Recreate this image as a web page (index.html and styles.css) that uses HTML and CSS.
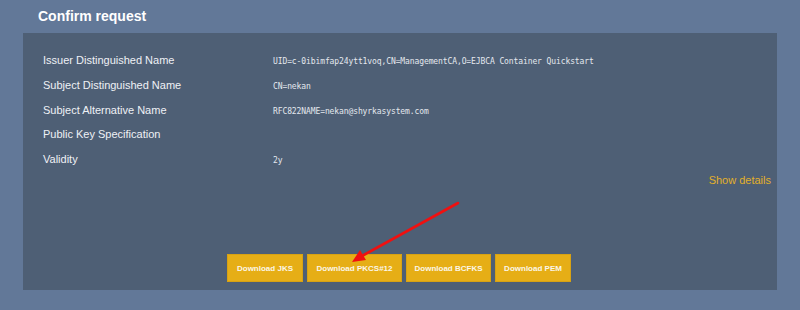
FILE: index.html
```html
<!DOCTYPE html>
<html>
<head>
<meta charset="utf-8">
<link rel="stylesheet" href="styles.css">
</head>
<body>
<div class="page">
  <h1 class="title">Confirm request</h1>
  <div class="panel">
    <div class="rows">
      <div class="row"><div class="label">Issuer Distinguished Name</div><div class="value">UID=c-0ibimfap24ytt1voq,CN=ManagementCA,O=EJBCA Container Quickstart</div></div>
      <div class="row"><div class="label">Subject Distinguished Name</div><div class="value">CN=nekan</div></div>
      <div class="row"><div class="label">Subject Alternative Name</div><div class="value">RFC822NAME=nekan@shyrkasystem.com</div></div>
      <div class="row"><div class="label">Public Key Specification</div><div class="value"></div></div>
      <div class="row"><div class="label">Validity</div><div class="value">2y</div></div>
    </div>
    <div class="details"><a class="details-link">Show details</a></div>
    <div class="buttons">
      <button class="btn btn-jks">Download JKS</button>
      <button class="btn btn-p12">Download PKCS#12</button>
      <button class="btn btn-bcfks">Download BCFKS</button>
      <button class="btn btn-pem">Download PEM</button>
    </div>
  </div>
</div>
<svg class="arrow" width="800" height="310" viewBox="0 0 800 310">
  <line x1="458" y1="203" x2="362" y2="256" stroke="#f01010" stroke-width="2.6" stroke-linecap="round"/>
  <polygon points="352,262 360,250 366,260" fill="#f01010"/>
</svg>
</body>
</html>
```
FILE: styles.css
```css
html, body {
  margin: 0;
  padding: 0;
  background: #627898;
  width: 800px;
  height: 310px;
  overflow: hidden;
  font-family: "Liberation Sans", Arial, sans-serif;
}
.page {
  padding: 0 23px 0 23px;
}
.title {
  margin: 0;
  height: 33px;
  line-height: 33px;
  padding-left: 15px;
  font-size: 14px;
  font-weight: bold;
  color: #ffffff;
}
.panel {
  background: #4e5f75;
  padding: 15px 5px 8px 20px;
  height: 257px;
  box-sizing: border-box;
  display: flex;
  flex-direction: column;
}
.row {
  display: flex;
  align-items: baseline;
  height: 24.75px;
  line-height: 24.75px;
}
.label {
  width: 230px;
  flex: none;
  font-size: 11px;
  color: #eef1f5;
}
.value {
  font-family: "DejaVu Sans Mono", "Liberation Mono", monospace;
  font-size: 8px;
  letter-spacing: -0.1px;
  color: #e4e8ee;
}
.details {
  text-align: right;
  line-height: 14px;
  height: 14px;
  padding-right: 1px;
}
.details-link {
  font-size: 11px;
  color: #e2b02a;
  cursor: pointer;
}
.buttons {
  margin-top: auto;
  display: flex;
  justify-content: center;
  gap: 4px;
  padding-right: 17px;
}
.btn {
  height: 28px;
  padding: 0;
  border: 1px solid #d8a212;
  background: #e6ae16;
  color: #fbf6e8;
  font-family: "Liberation Sans", Arial, sans-serif;
  font-size: 8px;
  font-weight: bold;
  text-align: center;
}
.btn-jks { width: 76px; }
.btn-p12 { width: 95px; }
.btn-bcfks { width: 85px; }
.btn-pem { width: 76px; }
.arrow {
  position: absolute;
  left: 0;
  top: 0;
  pointer-events: none;
}
```
